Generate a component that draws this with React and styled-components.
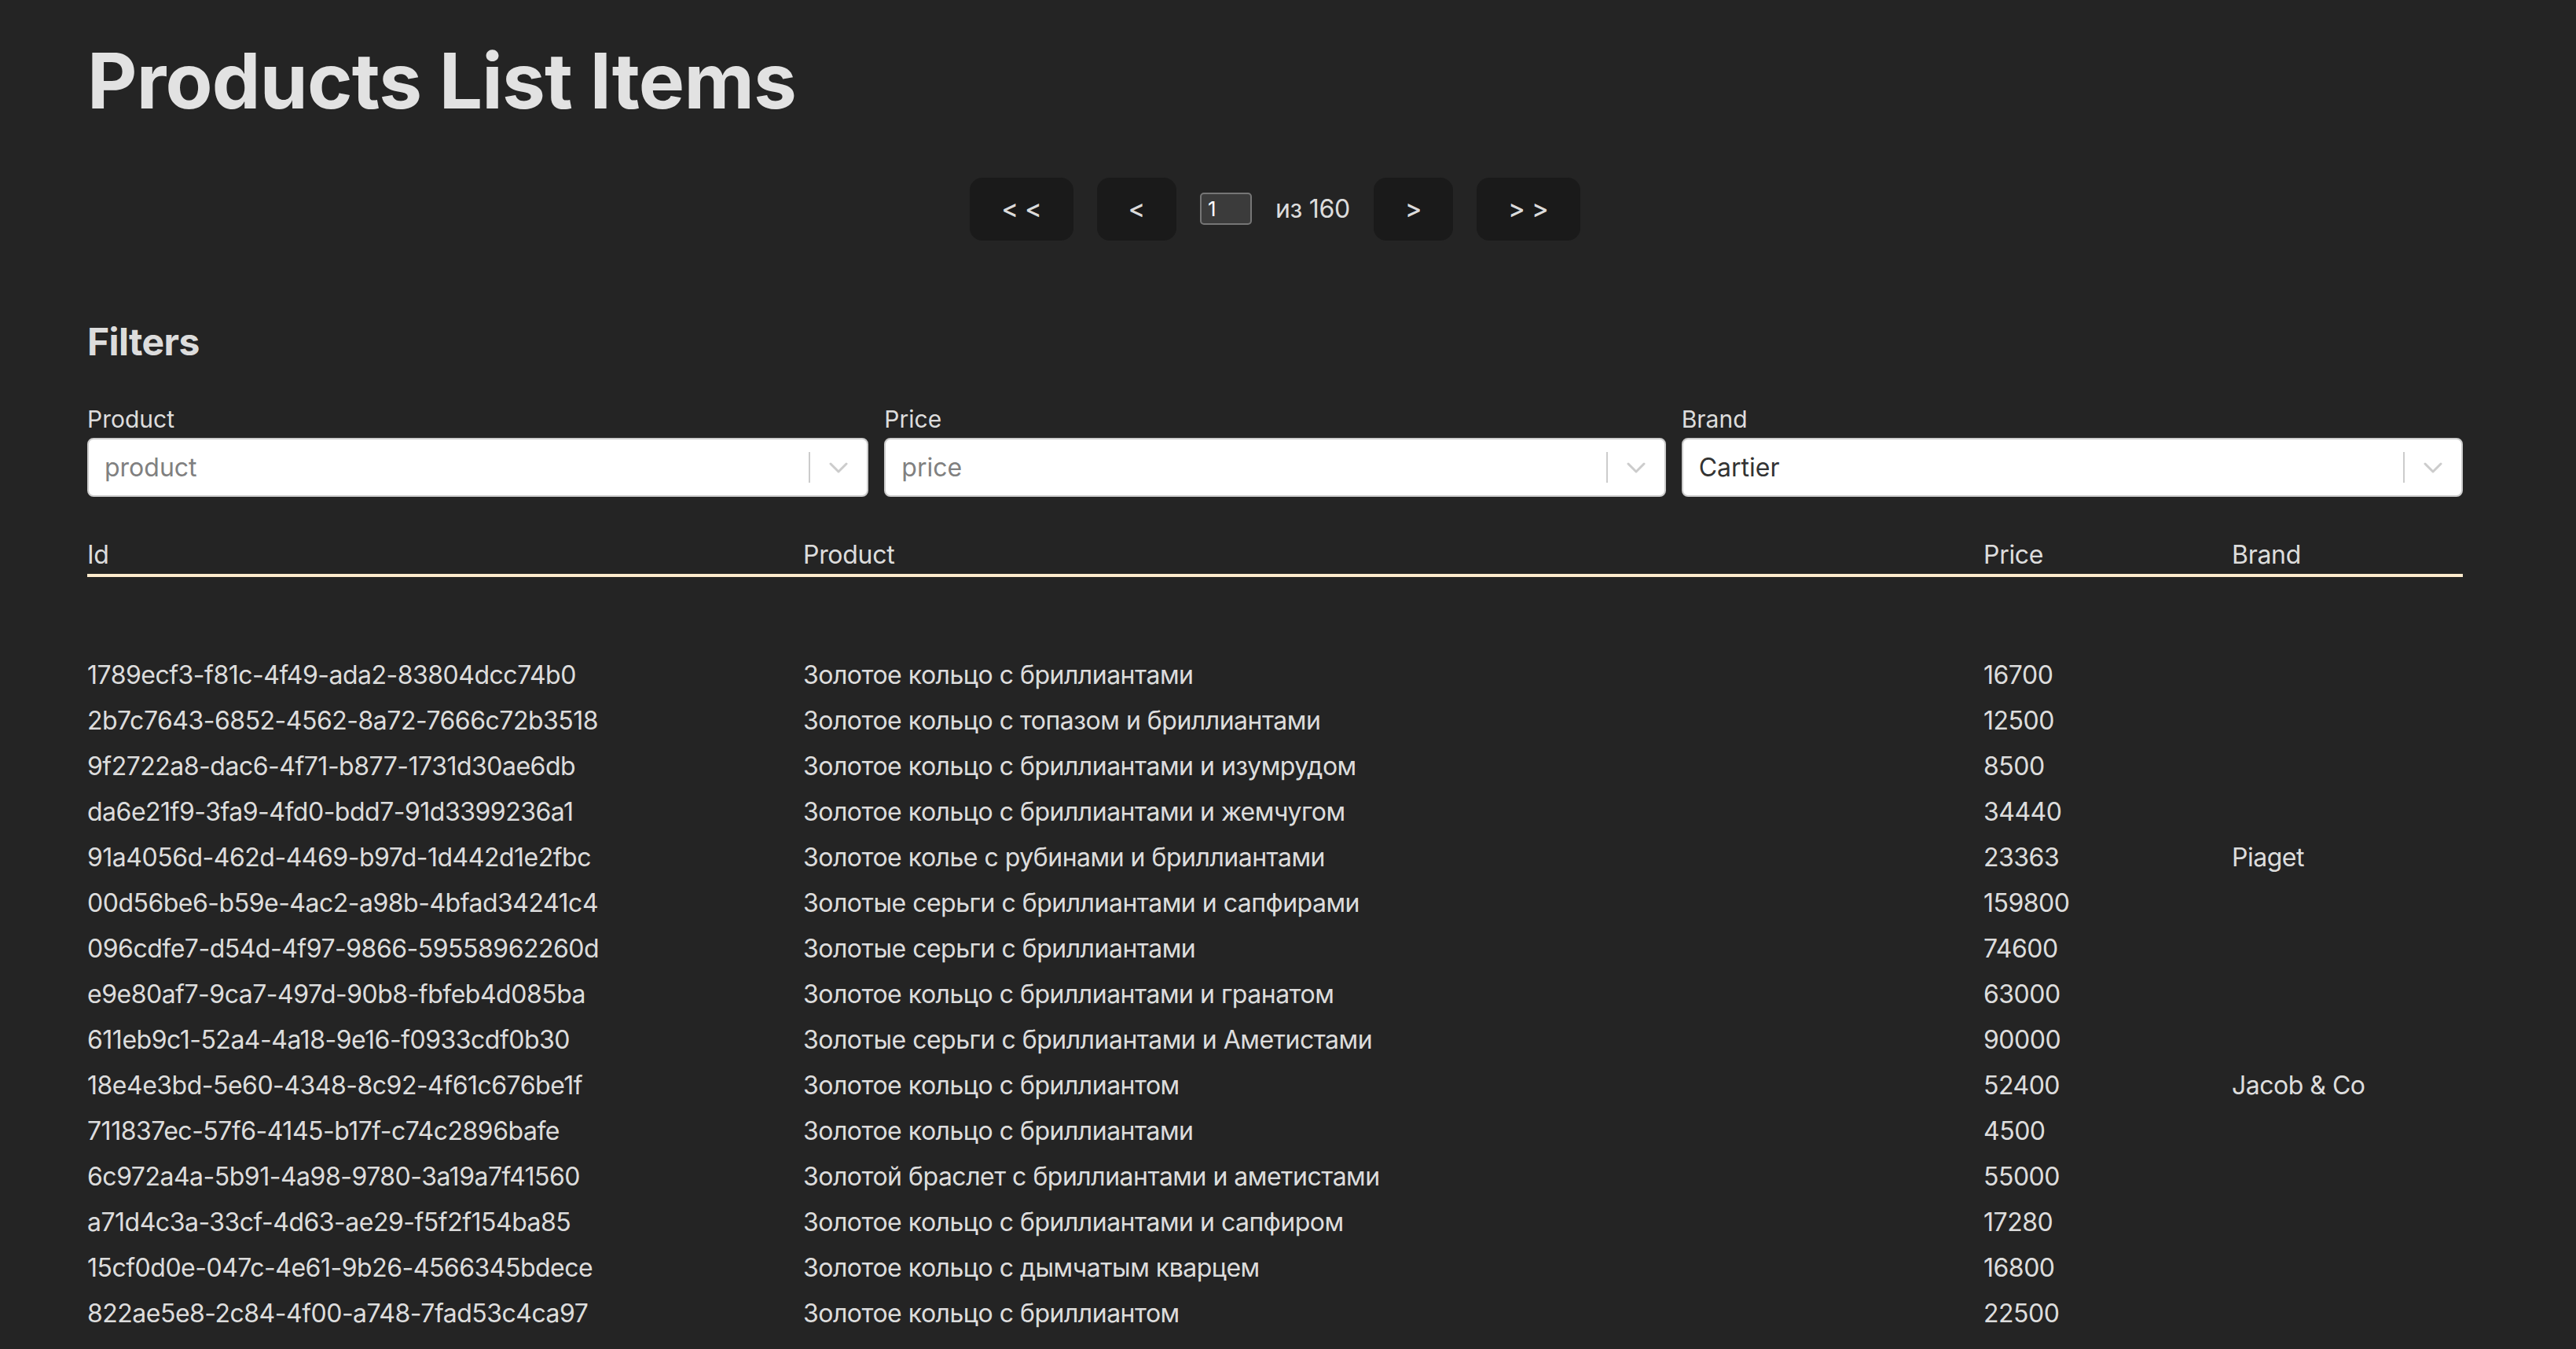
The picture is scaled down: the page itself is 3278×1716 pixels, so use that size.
import React from 'react';
import styled, { createGlobalStyle } from 'styled-components';

const products = [
  { id: '1789ecf3-f81c-4f49-ada2-83804dcc74b0', product: 'Золотое кольцо с бриллиантами', price: 16700, brand: '' },
  { id: '2b7c7643-6852-4562-8a72-7666c72b3518', product: 'Золотое кольцо с топазом и бриллиантами', price: 12500, brand: '' },
  { id: '9f2722a8-dac6-4f71-b877-1731d30ae6db', product: 'Золотое кольцо с бриллиантами и изумрудом', price: 8500, brand: '' },
  { id: 'da6e21f9-3fa9-4fd0-bdd7-91d3399236a1', product: 'Золотое кольцо с бриллиантами и жемчугом', price: 34440, brand: '' },
  { id: '91a4056d-462d-4469-b97d-1d442d1e2fbc', product: 'Золотое колье с рубинами и бриллиантами', price: 23363, brand: 'Piaget' },
  { id: '00d56be6-b59e-4ac2-a98b-4bfad34241c4', product: 'Золотые серьги с бриллиантами и сапфирами', price: 159800, brand: '' },
  { id: '096cdfe7-d54d-4f97-9866-59558962260d', product: 'Золотые серьги с бриллиантами', price: 74600, brand: '' },
  { id: 'e9e80af7-9ca7-497d-90b8-fbfeb4d085ba', product: 'Золотое кольцо с бриллиантами и гранатом', price: 63000, brand: '' },
  { id: '611eb9c1-52a4-4a18-9e16-f0933cdf0b30', product: 'Золотые серьги с бриллиантами и Аметистами', price: 90000, brand: '' },
  { id: '18e4e3bd-5e60-4348-8c92-4f61c676be1f', product: 'Золотое кольцо с бриллиантом', price: 52400, brand: 'Jacob & Co' },
  { id: '711837ec-57f6-4145-b17f-c74c2896bafe', product: 'Золотое кольцо с бриллиантами', price: 4500, brand: '' },
  { id: '6c972a4a-5b91-4a98-9780-3a19a7f41560', product: 'Золотой браслет с бриллиантами и аметистами', price: 55000, brand: '' },
  { id: 'a71d4c3a-33cf-4d63-ae29-f5f2f154ba85', product: 'Золотое кольцо с бриллиантами и сапфиром', price: 17280, brand: '' },
  { id: '15cf0d0e-047c-4e61-9b26-4566345bdece', product: 'Золотое кольцо с дымчатым кварцем', price: 16800, brand: '' },
  { id: '822ae5e8-2c84-4f00-a748-7fad53c4ca97', product: 'Золотое кольцо с бриллиантом', price: 22500, brand: '' },
];

const filters = [
  { label: 'Product', value: 'product', placeholder: true },
  { label: 'Price', value: 'price', placeholder: true },
  { label: 'Brand', value: 'Cartier', placeholder: false },
];

function Chevron() {
  return (
    <svg width="24" height="14" viewBox="0 0 24 14">
      <polyline points="2,2 12,12 22,2" fill="none" stroke="#cccccc" strokeWidth="3" strokeLinecap="round" strokeLinejoin="round" />
    </svg>
  );
}

function App() {
  return (
    <>
      <GlobalStyle />
      <Page>
        <Title>Products List Items</Title>

        <Pagination>
          <PageButton>&lt; &lt;</PageButton>
          <PageButton>&lt;</PageButton>
          <PageInput defaultValue="1" />
          <PageCount>из 160</PageCount>
          <PageButton>&gt;</PageButton>
          <PageButton>&gt; &gt;</PageButton>
        </Pagination>

        <SectionTitle>Filters</SectionTitle>
        <FilterRow>
          {filters.map((f) => (
            <FilterField key={f.label}>
              <FilterLabel>{f.label}</FilterLabel>
              <SelectBox>
                <SelectValue $placeholder={f.placeholder}>{f.value}</SelectValue>
                <Separator />
                <Indicator>
                  <Chevron />
                </Indicator>
              </SelectBox>
            </FilterField>
          ))}
        </FilterRow>

        <HeadRow>
          <Cell>Id</Cell>
          <Cell>Product</Cell>
          <Cell>Price</Cell>
          <Cell>Brand</Cell>
        </HeadRow>

        <Body>
          {products.map((p) => (
            <Row key={p.id}>
              <Cell>{p.id}</Cell>
              <Cell>{p.product}</Cell>
              <Cell>{p.price}</Cell>
              <Cell>{p.brand}</Cell>
            </Row>
          ))}
        </Body>
      </Page>
    </>
  );
}

const GlobalStyle = createGlobalStyle`
  html, body {
    margin: 0;
    background: #242424;
    overflow: hidden;
  }
  body {
    font-family: Inter, "Noto Sans", "Liberation Sans", sans-serif;
    color: rgba(255, 255, 255, 0.87);
  }
`;

const Page = styled.div`
  padding: 0 144px 0 111px;
`;

const Title = styled.h1`
  margin: 49px 0 0;
  font-size: 98px;
  line-height: 1.1;
  font-weight: 700;
  letter-spacing: -0.8px;
`;

const Pagination = styled.div`
  display: flex;
  justify-content: center;
  align-items: center;
  gap: 30px;
  margin-top: 69px;
`;

const PageButton = styled.button`
  height: 80px;
  padding: 0 38px;
  border: 2px solid transparent;
  border-radius: 16px;
  background: #1a1a1a;
  color: rgba(255, 255, 255, 0.87);
  font-family: inherit;
  font-size: 32px;
  font-weight: 500;
  cursor: pointer;
`;

const PageInput = styled.input`
  width: 66px;
  height: 41px;
  box-sizing: border-box;
  padding: 0 8px;
  border: 2px solid #767676;
  border-radius: 5px;
  background: #3b3b3b;
  color: #ffffff;
  font-family: inherit;
  font-size: 26px;
`;

const PageCount = styled.span`
  font-size: 32px;
  letter-spacing: -0.3px;
`;

const SectionTitle = styled.h2`
  margin: 100px 0 0;
  font-size: 48px;
  line-height: 1.2;
  font-weight: 700;
  letter-spacing: -0.6px;
`;

const FilterRow = styled.div`
  display: grid;
  grid-template-columns: repeat(3, 1fr);
  gap: 20px;
  margin-top: 49px;
`;

const FilterField = styled.div`
  display: flex;
  flex-direction: column;
`;

const FilterLabel = styled.label`
  font-size: 30px;
  line-height: 42px;
  margin-bottom: 3px;
`;

const SelectBox = styled.div`
  display: flex;
  align-items: center;
  height: 75px;
  box-sizing: border-box;
  border: 2px solid #cccccc;
  border-radius: 8px;
  background: #ffffff;
`;

const SelectValue = styled.div`
  flex: 1;
  padding-left: 20px;
  font-size: 32px;
  color: ${(p) => (p.$placeholder ? '#808080' : '#333333')};
`;

const Separator = styled.span`
  align-self: stretch;
  width: 2px;
  margin: 16px 0;
  background: #cccccc;
`;

const Indicator = styled.div`
  width: 72px;
  display: flex;
  justify-content: center;
  align-items: center;
`;

const columns = '911px 1502px 316px 1fr';

const HeadRow = styled.div`
  display: grid;
  grid-template-columns: ${columns};
  margin-top: 50px;
  border-bottom: 4px solid #ffebcd;
  font-size: 32px;
  line-height: 48px;
  letter-spacing: -0.3px;
`;

const Body = styled.div`
  margin-top: 96px;
`;

const Row = styled.div`
  display: grid;
  grid-template-columns: ${columns};
  font-size: 32px;
  line-height: 58px;
  letter-spacing: -0.5px;
`;

const Cell = styled.div`
  white-space: nowrap;
`;

export default App;
